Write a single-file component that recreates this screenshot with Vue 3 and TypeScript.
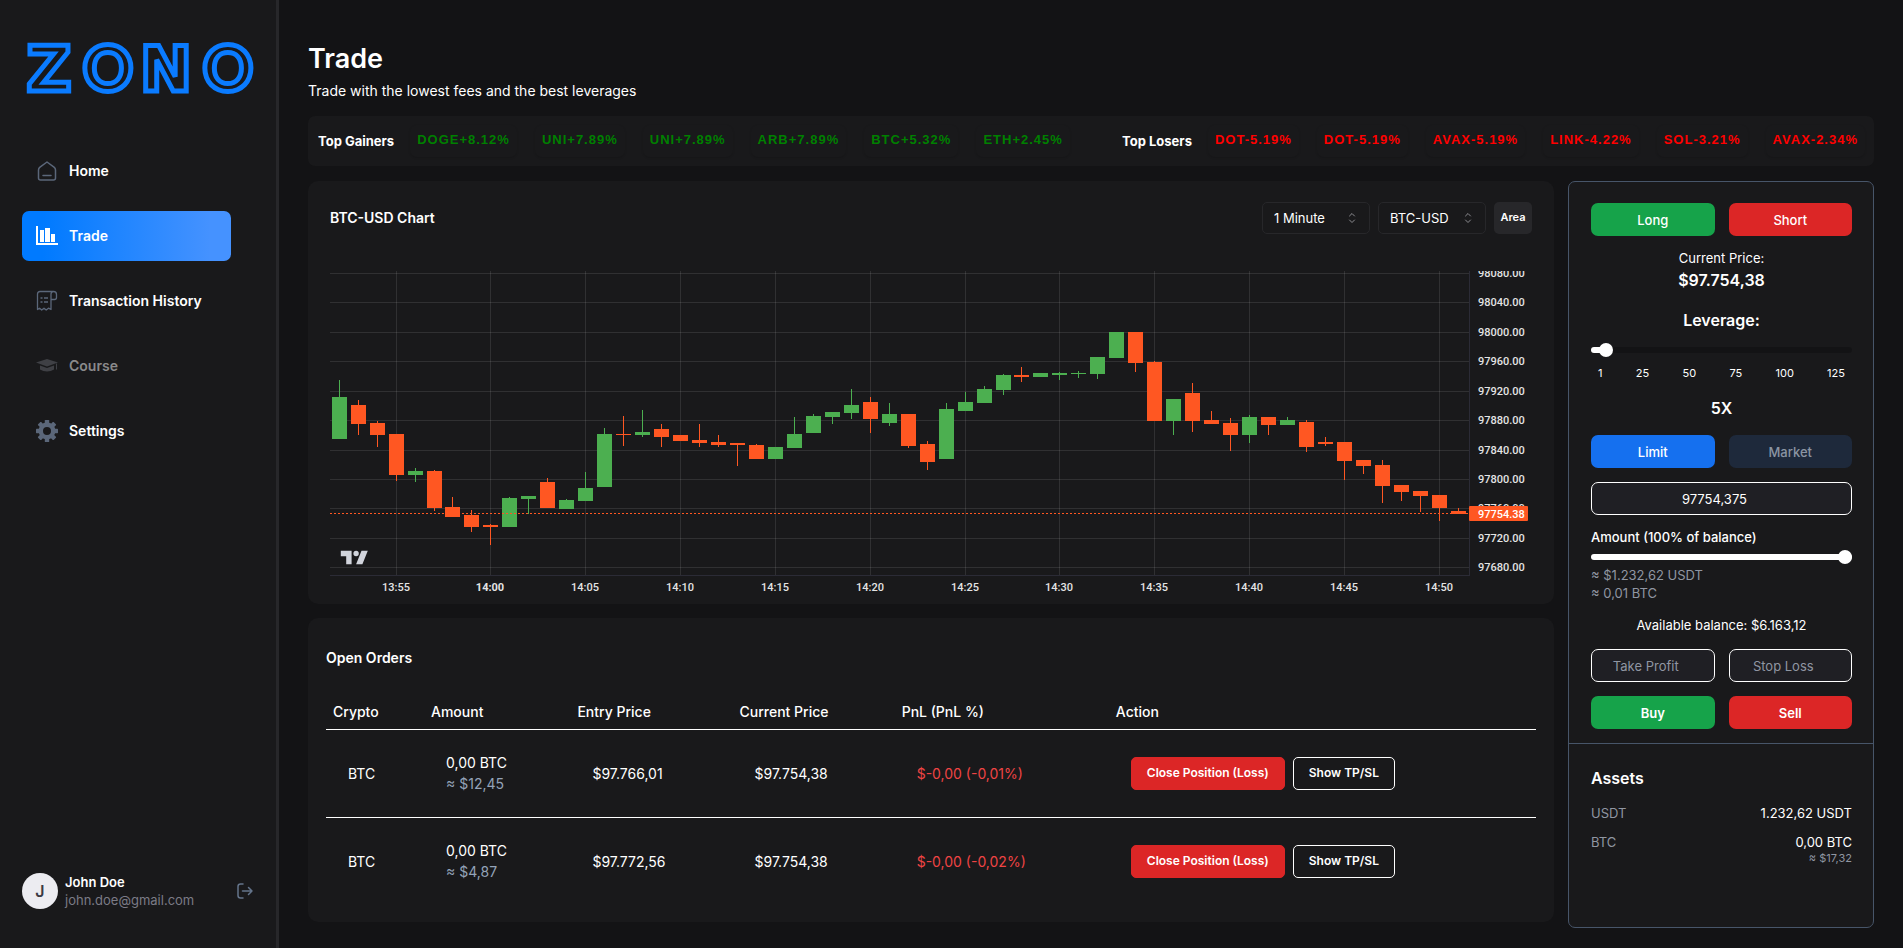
<script setup lang="ts">
import { computed, ref } from 'vue'

type Candle = { high: number; top: number; bottom: number; low: number; up: boolean }

const gainers = ['DOGE+8.12%', 'UNI+7.89%', 'UNI+7.89%', 'ARB+7.89%', 'BTC+5.32%', 'ETH+2.45%']
const losers = ['DOT-5.19%', 'DOT-5.19%', 'AVAX-5.19%', 'LINK-4.22%', 'SOL-3.21%', 'AVAX-2.34%']

const interval = ref('1 Minute')
const pair = ref('BTC-USD')

const leverage = ref(5)
const amount = ref(100)
const limitPrice = ref('97754,375')
const takeProfit = ref('')
const stopLoss = ref('')
const leverageTicks = [1, 25, 50, 75, 100, 125]
const leverageFill = computed(() => `${((leverage.value - 1) / 124) * 94 + 3}%`)

// Each row: direction, high, body top, body bottom, low (chart units, y grows downwards)
const rows: [string, number, number, number, number][] = [
  ['u', 109, 126, 168, 168], ['d', 129, 134, 153, 164], ['d', 150, 152, 164, 176], ['d', 163, 163, 204, 210],
  ['u', 197, 200, 204, 211], ['d', 199, 200, 237, 240], ['d', 226, 236, 246, 246], ['d', 239, 244, 256, 261],
  ['d', 253, 254, 256, 274], ['u', 226, 227, 256, 256], ['u', 225, 225, 228, 243], ['d', 207, 211, 237, 237],
  ['u', 228, 229, 238, 238], ['u', 201, 217, 230, 230], ['u', 157, 163, 216, 216], ['d', 145, 163, 164, 175],
  ['u', 139, 161, 164, 166], ['d', 153, 158, 166, 176], ['d', 164, 164, 170, 170], ['d', 153, 169, 172, 176],
  ['d', 164, 171, 174, 176], ['d', 172, 172, 174, 195], ['d', 173, 174, 188, 188], ['u', 176, 176, 188, 188],
  ['u', 146, 163, 177, 177], ['u', 143, 145, 162, 162], ['u', 141, 141, 146, 153], ['u', 118, 134, 142, 148],
  ['d', 126, 131, 148, 162], ['u', 132, 143, 152, 155], ['d', 143, 143, 175, 177], ['d', 170, 173, 191, 199],
  ['u', 132, 138, 188, 188], ['u', 121, 131, 140, 140], ['u', 115, 118, 132, 132], ['u', 103, 104, 119, 124],
  ['d', 96, 104, 106, 111], ['u', 102, 102, 106, 106], ['u', 101, 102, 104, 109], ['u', 100, 102, 103, 107],
  ['u', 86, 86, 103, 108], ['u', 61, 61, 87, 87], ['d', 61, 61, 92, 101], ['d', 90, 91, 150, 150],
  ['u', 128, 128, 150, 164], ['d', 112, 122, 150, 161], ['d', 140, 149, 153, 153], ['d', 147, 152, 164, 180],
  ['u', 144, 146, 164, 172], ['d', 146, 146, 154, 164], ['u', 146, 149, 154, 154], ['d', 149, 151, 176, 181],
  ['d', 166, 171, 173, 175], ['d', 171, 171, 190, 209], ['d', 189, 189, 195, 203], ['d', 189, 194, 215, 232],
  ['d', 214, 214, 221, 230], ['d', 220, 220, 225, 241], ['d', 224, 224, 237, 250], ['d', 237, 240, 243, 243],
]
const candles: Candle[] = rows.map(([dir, high, top, bottom, low]) => ({ high, top, bottom, low, up: dir === 'u' }))

const candleX = (i: number) => Math.floor(9.2 + i * 18.966)
const priceY = (price: number) => Math.round(2 + (98080 - price) * 0.7355)

const priceTicks = Array.from({ length: 11 }, (_, i) => 98080 - i * 40)
const timeTicks = Array.from({ length: 12 }, (_, i) => {
  const minutes = 13 * 60 + 55 + i * 5
  return {
    label: `${Math.floor(minutes / 60)}:${String(minutes % 60).padStart(2, '0')}`,
    x: candleX(3 + i * 5),
    major: minutes % 60 === 0,
  }
})

const orders = [
  { coin: 'BTC', amount: '0,00 BTC', value: '≈ $12,45', entry: '$97.766,01', current: '$97.754,38', pnl: '$-0,00 (-0,01%)' },
  { coin: 'BTC', amount: '0,00 BTC', value: '≈ $4,87', entry: '$97.772,56', current: '$97.754,38', pnl: '$-0,00 (-0,02%)' },
]

const gearTeeth = [0, 45, 90, 135, 180, 225, 270, 315]
</script>

<template>
  <div class="app">
    <aside class="sidebar">
      <svg class="logo" viewBox="0 0 232 84" role="img" aria-label="ZONO">
        <text y="65" text-anchor="middle"><tspan class="wide" x="27">Z</tspan><tspan x="86">O</tspan><tspan class="wide" x="144">N</tspan><tspan x="206">O</tspan></text>
      </svg>

      <nav class="nav">
        <a class="nav-item" href="#home">
          <svg class="nav-icon" viewBox="0 0 22 22" fill="none" stroke="currentColor" stroke-width="1.5" stroke-linejoin="round" stroke-linecap="round">
            <path d="M11 2 L18 7.2 Q19.5 8.4 19.5 10 V18 Q19.5 20 17.5 20 H4.500 Q2.500 20 2.500 18 V10 Q2.500 8.400 4 7.200 Z" />
            <path d="M7 15.500 H15" />
          </svg>
          Home
        </a>
        <a class="nav-item active" href="#trade" aria-current="page">
          <svg class="nav-icon" viewBox="0 0 22 22" fill="currentColor">
            <path d="M0 1 H2 V18 H22 V20 H0 Z" />
            <rect x="4" y="5" width="4" height="12" />
            <rect x="9" y="3" width="5" height="14" />
            <rect x="15" y="9" width="4" height="8" />
          </svg>
          Trade
        </a>
        <a class="nav-item" href="#history">
          <svg class="nav-icon" viewBox="0 0 22 22" fill="none" stroke="currentColor" stroke-width="1.3" stroke-linejoin="round">
            <path d="M17.500 1.500 H4 Q1.500 1.500 1.500 4 V19.500 L3.600 18.200 L5.700 20 L8 18.200 L10.200 20 L12.500 18.200 L15 19.500 V4 Q15 1.500 17.500 1.500 Q20.500 1.500 20.500 4.500 V7.500 Q20.500 9.500 18.500 9.500 H15" />
            <path d="M4.500 8 H6.500 M8 8 H12 M4.500 12 H6.500 M8 12 H12" />
          </svg>
          Transaction History
        </a>
        <a class="nav-item disabled" href="#course" aria-disabled="true">
          <svg class="nav-icon" viewBox="0 0 22 22" fill="currentColor">
            <path d="M11 4 L22 7.500 L11 11.500 L0 7.500 Z" />
            <path d="M4 10.500 L11 13 L18 10.500 V14.500 Q15 16.500 11 16.500 Q7 16.500 4 14.500 Z" />
            <path d="M20 8.500 H21 V14.500 H20 Z" />
          </svg>
          Course
        </a>
        <a class="nav-item" href="#settings">
          <svg class="nav-icon gear" viewBox="0 0 22 22">
            <circle cx="11" cy="11" r="6.200" fill="none" stroke="currentColor" stroke-width="4.400" />
            <rect v-for="a in gearTeeth" :key="a" x="8.800" y="0" width="4.400" height="4" rx="0.600" fill="currentColor" :transform="`rotate(${a} 11 11)`" />
          </svg>
          Settings
        </a>
      </nav>

      <div class="user">
        <span class="avatar">J</span>
        <div class="user-text">
          <strong>John Doe</strong>
          <span>john.doe@gmail.com</span>
        </div>
        <button class="logout" type="button" aria-label="Log out">
          <svg viewBox="0 0 18 18" fill="none" stroke="currentColor" stroke-width="1.500" stroke-linecap="round" stroke-linejoin="round">
            <path d="M7 2 H4.500 Q2 2 2 4.500 V13.500 Q2 16 4.500 16 H7" />
            <path d="M6.500 9 H16 M12.500 5.500 L16 9 L12.500 12.500" />
          </svg>
        </button>
      </div>
    </aside>

    <main class="main">
      <h1>Trade</h1>
      <p class="subtitle">Trade with the lowest fees and the best leverages</p>

      <section class="ticker">
        <div class="ticker-group">
          <h2>Top Gainers</h2>
          <ul class="chips gain">
            <li v-for="(g, i) in gainers" :key="i">{{ g }}</li>
          </ul>
        </div>
        <div class="ticker-group">
          <h2>Top Losers</h2>
          <ul class="chips loss">
            <li v-for="(l, i) in losers" :key="i">{{ l }}</li>
          </ul>
        </div>
      </section>

      <div class="columns">
        <div class="left">
          <section class="card chart-card">
            <header class="chart-head">
              <h2>BTC-USD Chart</h2>
              <div class="controls">
                <label class="picker">
                  <select v-model="interval" aria-label="Interval">
                    <option>1 Minute</option>
                    <option>5 Minutes</option>
                  </select>
                  <svg viewBox="0 0 14 14" fill="none" stroke="currentColor" stroke-linecap="round" stroke-linejoin="round"><path d="M4.500 5 L7 2.500 L9.500 5 M4.500 9 L7 11.500 L9.500 9" /></svg>
                </label>
                <label class="picker">
                  <select v-model="pair" aria-label="Pair">
                    <option>BTC-USD</option>
                    <option>ETH-USD</option>
                  </select>
                  <svg viewBox="0 0 14 14" fill="none" stroke="currentColor" stroke-linecap="round" stroke-linejoin="round"><path d="M4.500 5 L7 2.500 L9.500 5 M4.500 9 L7 11.500 L9.500 9" /></svg>
                </label>
                <button class="area" type="button">Area</button>
              </div>
            </header>

            <svg class="chart" viewBox="0 0 1202 326" role="img" aria-label="BTC-USD candlestick chart">
              <g class="grid">
                <rect v-for="p in priceTicks" :key="p" x="0" :y="priceY(p)" width="1139" height="1" />
                <rect v-for="t in timeTicks" :key="t.label" :x="t.x" y="0" width="1" height="304" />
              </g>
              <g class="axis">
                <rect x="0" y="304" width="1140" height="1" />
                <rect x="1139" y="0" width="1" height="304" />
              </g>
              <g v-for="(c, i) in candles" :key="i" :class="c.up ? 'up' : 'down'">
                <rect :x="candleX(i)" :y="c.high" width="1" :height="c.low - c.high" />
                <rect :x="candleX(i) - 7" :y="c.top" width="15" :height="c.bottom - c.top" />
              </g>
              <line class="last-line" x1="0" y1="242.500" x2="1139" y2="242.500" />
              <g class="ticks">
                <text v-for="p in priceTicks" :key="p" x="1148" :y="priceY(p) + 4">{{ p }}.00</text>
                <text v-for="t in timeTicks" :key="t.label" :x="t.x" y="320" text-anchor="middle" :class="{ major: t.major }">{{ t.label }}</text>
              </g>
              <rect class="last-tag" x="1139" y="235" width="59" height="15" rx="1" />
              <text class="last-text" x="1148" y="247">97754.38</text>
              <g class="mark" transform="translate(9 278) scale(0.9)">
                <path d="M14 2H2v6h6v9h6V2Zm12 15h-7l6-15h7l-6 15Zm-7-9a3 3 0 1 0 0-6 3 3 0 0 0 0 6Z" />
              </g>
            </svg>
          </section>

          <section class="card orders">
            <h2>Open Orders</h2>
            <table>
              <colgroup>
                <col class="c-coin" /><col class="c-amount" /><col class="c-price" /><col class="c-price" /><col class="c-pnl" /><col />
              </colgroup>
              <thead>
                <tr>
                  <th>Crypto</th><th>Amount</th><th>Entry Price</th><th>Current Price</th><th>PnL (PnL %)</th><th>Action</th>
                </tr>
              </thead>
              <tbody>
                <tr v-for="(o, i) in orders" :key="i">
                  <td>{{ o.coin }}</td>
                  <td>{{ o.amount }}<span class="approx">{{ o.value }}</span></td>
                  <td>{{ o.entry }}</td>
                  <td>{{ o.current }}</td>
                  <td class="negative">{{ o.pnl }}</td>
                  <td>
                    <div class="actions">
                      <button class="close" type="button">Close Position (Loss)</button>
                      <button class="show" type="button">Show TP/SL</button>
                    </div>
                  </td>
                </tr>
              </tbody>
            </table>
          </section>
        </div>

        <aside class="panel">
          <form class="order-form" @submit.prevent>
            <div class="pair-row">
              <button class="btn green" type="button">Long</button>
              <button class="btn red" type="button">Short</button>
            </div>
            <div class="price">
              <span>Current Price:</span>
              <strong>$97.754,38</strong>
            </div>
            <label class="big" for="leverage">Leverage:</label>
            <input id="leverage" v-model.number="leverage" class="slider" type="range" min="1" max="125" :style="{ '--fill': leverageFill }" />
            <div class="scale"><span v-for="t in leverageTicks" :key="t">{{ t }}</span></div>
            <output class="big multiple" for="leverage">{{ leverage }}X</output>
            <div class="pair-row">
              <button class="btn blue" type="button">Limit</button>
              <button class="btn muted" type="button">Market</button>
            </div>
            <input v-model="limitPrice" class="field limit" type="text" aria-label="Limit price" />
            <label class="amount-label" for="amount">Amount ({{ amount }}% of balance)</label>
            <input id="amount" v-model.number="amount" class="slider amount" type="range" min="0" max="100" :style="{ '--fill': amount + '%' }" />
            <p class="estimate">≈ $1.232,62 USDT<br />≈ 0,01 BTC</p>
            <p class="available">Available balance: $6.163,12</p>
            <div class="pair-row">
              <input v-model="takeProfit" class="field" type="text" placeholder="Take Profit" aria-label="Take profit" />
              <input v-model="stopLoss" class="field" type="text" placeholder="Stop Loss" aria-label="Stop loss" />
            </div>
            <div class="pair-row">
              <button class="btn green strong" type="button">Buy</button>
              <button class="btn red strong" type="button">Sell</button>
            </div>
          </form>
          <section class="assets">
            <h2>Assets</h2>
            <dl>
              <div><dt>USDT</dt><dd>1.232,62 USDT</dd></div>
              <div><dt>BTC</dt><dd>0,00 BTC<small>≈ $17,32</small></dd></div>
            </dl>
          </section>
        </aside>
      </div>
    </main>
  </div>
</template>

<style>
body {
  margin: 0;
  background: #131315;
}
</style>

<style scoped>
.app,
.app * {
  box-sizing: border-box;
}
.app {
  display: flex;
  min-height: 100vh;
  color: #fff;
  font-family: Inter, "Liberation Sans", sans-serif;
  font-size: 14px;
  line-height: 20px;
}
h1, h2, p, ul, dl, dd {
  margin: 0;
  padding: 0;
}
button, input, select {
  font: inherit;
  color: inherit;
}
button {
  cursor: pointer;
}

/* Sidebar */
.sidebar {
  display: flex;
  flex-direction: column;
  flex: none;
  width: 279px;
  padding: 26px 22px 39px;
  background: #19191b;
  border-right: 3px solid #27272a;
}
.logo {
  width: 232px;
  height: 84px;
}
.logo text {
  font-family: Lato, sans-serif;
  font-weight: 900;
  font-size: 62px;
  fill: none;
  stroke: #0a7bff;
  stroke-width: 5;
}
.logo .wide {
  font-family: "DejaVu Sans", sans-serif;
  font-weight: 700;
}
.nav {
  display: flex;
  flex-direction: column;
  gap: 15px;
  margin: 36px 23px 0 0;
}
.nav-item {
  display: flex;
  align-items: center;
  gap: 11px;
  height: 50px;
  padding: 0 14px;
  border-radius: 7px;
  color: #fff;
  font-weight: 600;
  text-decoration: none;
  white-space: nowrap;
}
.nav-icon {
  flex: none;
  width: 22px;
  height: 22px;
  color: #5b677a;
}
.nav-item.active {
  background: linear-gradient(90deg, #007aff 10%, #4592ff 90%);
}
.nav-item.active .nav-icon {
  color: #fff;
}
.nav-item.disabled {
  color: #8a8a8b;
}
.nav-item.disabled .nav-icon {
  color: #3f4045;
}
.user {
  display: flex;
  align-items: center;
  gap: 7px;
  margin-top: auto;
}
.avatar {
  display: grid;
  place-items: center;
  width: 36px;
  height: 36px;
  border-radius: 50%;
  background: #ececf1;
  color: #3a3a44;
  font-size: 16px;
  font-weight: 600;
}
.user-text {
  display: flex;
  flex-direction: column;
  font-size: 13px;
  line-height: 18px;
}
.user-text span {
  color: #7b7b86;
}
.user-text strong {
  font-weight: 600;
}
.logout {
  display: flex;
  margin-left: auto;
  padding: 0;
  border: 0;
  background: none;
  color: #64748b;
}
.logout svg {
  width: 18px;
  height: 18px;
}

/* Page heading and ticker */
.main {
  flex: 1;
  min-width: 0;
  padding: 43px 29px 20px;
}
h1 {
  font-size: 27px;
  font-weight: 600;
  line-height: 32px;
}
.subtitle {
  margin-top: 6px;
}
.ticker {
  display: flex;
  justify-content: space-between;
  align-items: center;
  height: 50px;
  margin: 15px 0;
  padding: 0 9px 0 10px;
  border-radius: 7px;
  background: #19191b;
}
.ticker-group {
  display: flex;
  align-items: center;
  gap: 16px;
  white-space: nowrap;
}
h2 {
  font-size: 14px;
  font-weight: 600;
}
.ticker h2 {
  font-size: 13px;
  font-weight: 700;
}
.chips {
  display: flex;
  gap: 18px;
  list-style: none;
}
.chips li {
  height: 32px;
  padding: 0 7px;
  border-radius: 7px;
  box-shadow: 0 1px 2px rgba(0, 0, 0, 0.15);
  font-family: "Liberation Sans", Arial, sans-serif;
  font-size: 13px;
  font-weight: 700;
  letter-spacing: 1px;
  line-height: 30px;
}
.gain {
  color: #008000;
}
.loss {
  color: #f00;
}

/* Left column */
.columns {
  display: grid;
  grid-template-columns: minmax(0, 1fr) 306px;
  gap: 14px;
  align-items: start;
}
.left {
  display: grid;
  gap: 14px;
}
.card {
  background: #19191b;
  border-radius: 10px;
}
.chart-card {
  padding: 21px 22px 7px;
}
.chart-head {
  display: flex;
  align-items: center;
  justify-content: space-between;
  margin-bottom: 37px;
}
.controls {
  display: flex;
  gap: 8px;
}
.picker {
  position: relative;
  width: 108px;
}
.picker select {
  appearance: none;
  width: 100%;
  height: 32px;
  padding: 0 11px;
  border: 1px solid #27272a;
  border-radius: 5px;
  background: #19191b;
  font-size: 13px;
}
.picker svg {
  position: absolute;
  top: 9px;
  right: 11px;
  width: 14px;
  height: 14px;
  color: #8b8b90;
  pointer-events: none;
}
.area {
  width: 38px;
  height: 32px;
  padding: 0 0 2px;
  border: 0;
  border-radius: 5px;
  background: #27272a;
  font-size: 11px;
  font-weight: 600;
}
.chart {
  display: block;
  width: 100%;
  height: auto;
}
.grid rect {
  fill: rgba(255, 255, 255, 0.1);
}
.axis rect {
  fill: #2b2b36;
}
.up {
  fill: #4caf50;
}
.down {
  fill: #ff5722;
}
.last-line {
  stroke: #ff5722;
  stroke-dasharray: 2 2;
}
.ticks text,
.last-text {
  fill: #e4e4e4;
  font-family: Roboto, "Open Sans", sans-serif;
  font-size: 11px;
  font-weight: 500;
}
.ticks .major {
  font-weight: 700;
}
.last-tag {
  fill: #ff5722;
}
.last-text {
  fill: #fff;
}
.mark {
  fill: #d1d4dc;
}

/* Orders */
.orders {
  min-height: 304px;
  padding: 30px 18px 16px;
}
table {
  width: 100%;
  margin-top: 27px;
  border-collapse: collapse;
  table-layout: fixed;
}
.c-coin { width: 8.1%; }
.c-amount { width: 12.1%; }
.c-price { width: 13.4%; }
.c-pnl { width: 17.7%; }
th {
  height: 34px;
  padding: 0 7px;
  border-bottom: 1px solid #fff;
  font-weight: 500;
  text-align: left;
}
td {
  height: 88px;
  padding: 0 22px;
  line-height: 21px;
}
tbody tr + tr td {
  border-top: 1px solid #fff;
}
.approx {
  display: block;
  color: #94a3b8;
}
.negative {
  color: #ef4444;
}
.actions {
  display: flex;
  gap: 8px;
}
.actions button {
  height: 33px;
  padding: 0 15px 2px;
  border: 1px solid #dc2626;
  border-radius: 5px;
  background: #dc2626;
  font-size: 12px;
  font-weight: 600;
  white-space: nowrap;
}
.actions .show {
  border-color: #fff;
  background: none;
}

/* Trade panel */
.panel {
  min-height: 747px;
  border: 1px solid #475569;
  border-radius: 7px;
  background: #19191b;
  font-size: 13px;
  line-height: 18px;
}
.order-form {
  display: flex;
  flex-direction: column;
  padding: 21px 21px 14px 22px;
  border-bottom: 1px solid #475569;
}
.pair-row {
  display: grid;
  grid-template-columns: repeat(2, minmax(0, 1fr));
  gap: 14px;
}
.btn {
  height: 33px;
  padding: 0;
  border: 0;
  border-radius: 7px;
  font-weight: 500;
}
.strong {
  font-weight: 600;
}
.green { background: #16a34a; }
.red { background: #dc2626; }
.blue { background: #1570ef; }
.muted { background: #1e293b; color: #8b95a3; }
.price {
  display: flex;
  flex-direction: column;
  align-items: center;
  margin: 13px 0 15px;
}
.price strong {
  font-size: 16px;
  font-weight: 600;
  line-height: 26px;
}
.big {
  font-size: 16px;
  font-weight: 600;
  line-height: 24px;
  text-align: center;
}
.slider {
  appearance: none;
  width: 100%;
  height: 14px;
  margin: 11px 0 9px;
  background: none;
}
.slider::-webkit-slider-runnable-track {
  height: 6px;
  border-radius: 3px;
  background: linear-gradient(90deg, #fff var(--fill), #131315 var(--fill));
}
.slider::-webkit-slider-thumb {
  appearance: none;
  width: 14px;
  height: 14px;
  margin-top: -4px;
  border-radius: 50%;
  background: #fff;
}
.scale {
  display: flex;
  justify-content: space-between;
  padding: 0 7px;
  font-size: 11px;
  line-height: 14px;
}
.multiple {
  margin: 16px 0 15px;
}
.field {
  width: 100%;
  min-width: 0;
  height: 33px;
  padding: 0 21px 0 7px;
  border: 1px solid #fff;
  border-radius: 7px;
  background: #1f1f24;
  text-align: center;
}
.field::placeholder {
  color: #9096a2;
}
.limit {
  margin: 14px 0 13px;
}
.amount-label {
  font-weight: 500;
}
.slider.amount {
  margin: 4px 0 2px;
}
.estimate {
  color: #9096a2;
}
.available {
  margin: 14px 0 15px;
  text-align: center;
}
.order-form .pair-row:last-child {
  margin-top: 14px;
}
.assets {
  padding: 22px 21px 22px 22px;
}
.assets h2 {
  font-size: 16px;
  line-height: 24px;
}
.assets dl > div {
  display: flex;
  justify-content: space-between;
  margin-top: 14px;
}
.assets dl > div + div {
  margin-top: 11px;
}
.assets dt {
  color: #9096a2;
}
.assets dd {
  text-align: right;
}
.assets small {
  display: block;
  color: #9096a2;
  font-size: 11px;
  line-height: 14px;
}
</style>
